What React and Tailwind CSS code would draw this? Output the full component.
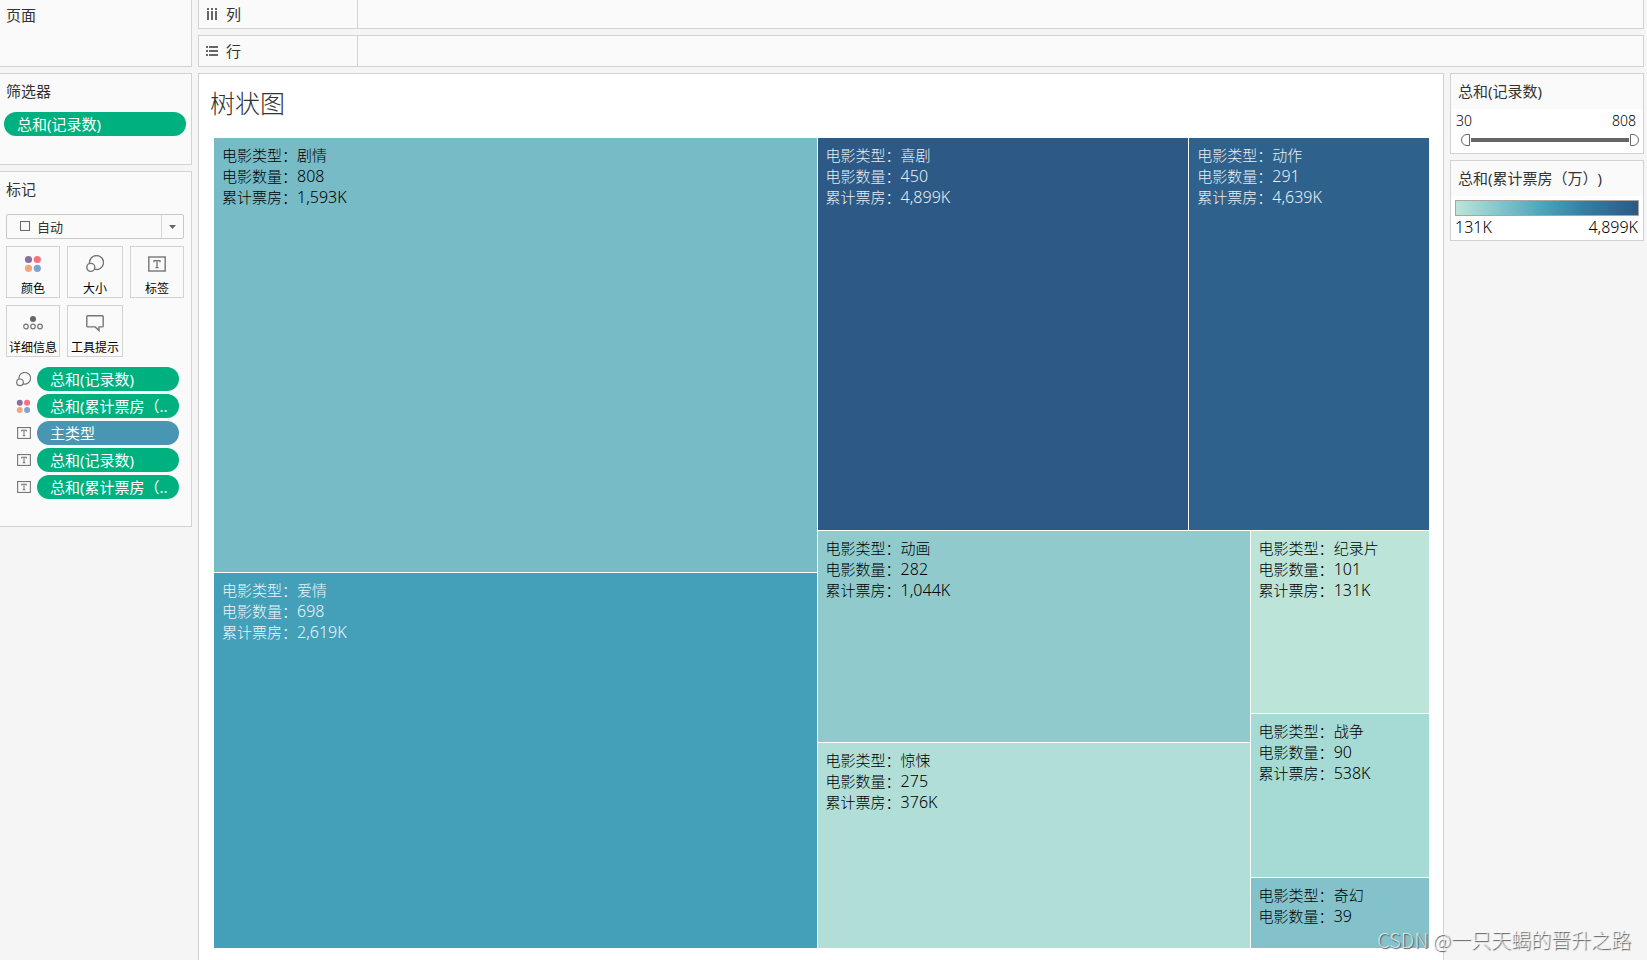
import { useState } from "react";

const tree = {
  dir: "row",
  nodes: [
    {
      dir: "col",
      nodes: [
        { type: "剧情", count: 808, box: "1,593K", cls: "bg-[#76bbc6] text-black" },
        { type: "爱情", count: 698, box: "2,619K", cls: "bg-[#449fb9] text-white/90" },
      ],
    },
    {
      dir: "col",
      nodes: [
        {
          dir: "row",
          nodes: [
            { type: "喜剧", count: 450, box: "4,899K", cls: "bg-[#2c5985] text-white/90" },
            { type: "动作", count: 291, box: "4,639K", cls: "bg-[#2e618c] text-white/90" },
          ],
        },
        {
          dir: "row",
          nodes: [
            {
              dir: "col",
              nodes: [
                { type: "动画", count: 282, box: "1,044K", cls: "bg-[#90cacd] text-black" },
                { type: "惊悚", count: 275, box: "376K", cls: "bg-[#b1ded7] text-black" },
              ],
            },
            {
              dir: "col",
              nodes: [
                { type: "纪录片", count: 101, box: "131K", cls: "bg-[#bce4d8] text-black" },
                { type: "战争", count: 90, box: "538K", cls: "bg-[#a6dad4] text-black" },
                { type: "奇幻", count: 39, cls: "bg-[#83c2cb] text-black" },
              ],
            },
          ],
        },
      ],
    },
  ],
};

const total = (n) => (n.nodes ? n.nodes.reduce((sum, c) => sum + total(c), 0) : n.count);

function TreeNode({ node }) {
  const style = { flexGrow: total(node) };
  if (node.nodes) {
    return (
      <div
        className={`flex basis-0 min-w-0 min-h-0 gap-px ${node.dir === "row" ? "flex-row" : "flex-col"}`}
        style={style}
      >
        {node.nodes.map((child, i) => (
          <TreeNode key={i} node={child} />
        ))}
      </div>
    );
  }
  return (
    <div className={`basis-0 min-w-0 min-h-0 overflow-hidden ${node.cls}`} style={style}>
      <div className="px-2 py-[7px] text-[15px] leading-[21px] font-light whitespace-nowrap">
        <p className="h-[21px]">电影类型：{node.type}</p>
        <p className="h-[21px]">
          电影数量：<span className="text-[16px]">{node.count}</span>
        </p>
        {node.box && (
          <p className="h-[21px]">
            累计票房：<span className="text-[16px]">{node.box}</span>
          </p>
        )}
      </div>
    </div>
  );
}

function ColorIcon({ size = 18 }) {
  return (
    <svg width={size} height={size} viewBox="0 0 18 18">
      <circle cx="4.5" cy="4.5" r="3.6" fill="#87709c" />
      <circle cx="13.3" cy="4.5" r="3.6" fill="#f8707f" />
      <circle cx="4.5" cy="13.3" r="3.6" fill="#f3a67a" />
      <circle cx="13.3" cy="13.3" r="3.6" fill="#7fa3cc" />
    </svg>
  );
}

function SizeIcon({ size = 18 }) {
  return (
    <svg width={size} height={size} viewBox="0 0 18 18" fill="none" stroke="#757575" strokeWidth="1.4">
      <path d="M3.6 8.6A7 7 0 1 1 8.4 14.2" />
      <circle cx="4.8" cy="12.4" r="4" />
    </svg>
  );
}

function LabelIcon({ size = 18 }) {
  return (
    <svg width={size} height={size} viewBox="0 0 18 18" fill="none" stroke="#757575">
      <rect x="0.8" y="2" width="16.4" height="14" strokeWidth="1.4" />
      <path d="M6 7.2V5.6H12V7.2M9 5.6V12.5M7.4 12.6H10.6" strokeWidth="1.3" />
    </svg>
  );
}

function DetailIcon() {
  return (
    <svg width="20" height="18" viewBox="0 0 20 18" fill="none" stroke="#757575" strokeWidth="1.2">
      <circle cx="10" cy="5" r="3" fill="#666" stroke="none" />
      <circle cx="3" cy="12.5" r="2.3" />
      <circle cx="10" cy="12.5" r="2.3" />
      <circle cx="17" cy="12.5" r="2.3" />
    </svg>
  );
}

function TooltipIcon() {
  return (
    <svg width="18" height="18" viewBox="0 0 18 18" fill="none" stroke="#757575" strokeWidth="1.4">
      <path d="M1.7 1.7H16.3Q17.2 1.7 17.2 2.6V12Q17.2 12.9 16.3 12.9H13V16.6L9.2 12.9H1.7Q0.8 12.9 0.8 12V2.6Q0.8 1.7 1.7 1.7Z" />
    </svg>
  );
}

function ColumnsIcon() {
  return (
    <svg width="12" height="12" viewBox="0 0 12 12" fill="#666">
      <path d="M1 0h2v2H1zM5 0h2v2H5zM9 0h2v2H9zM1 3h2v9H1zM5 3h2v9H5zM9 3h2v9H9z" />
    </svg>
  );
}

function RowsIcon() {
  return (
    <svg width="12" height="12" viewBox="0 0 12 12" fill="#666">
      <path d="M0 1h2v2H0zM0 5h2v2H0zM0 9h2v2H0zM3 1h9v2H3zM3 5h9v2H3zM3 9h9v2H3z" />
    </svg>
  );
}

const markButtons = [
  { label: "颜色", icon: <ColorIcon /> },
  { label: "大小", icon: <SizeIcon /> },
  { label: "标签", icon: <LabelIcon /> },
  { label: "详细信息", icon: <DetailIcon /> },
  { label: "工具提示", icon: <TooltipIcon /> },
];

const markPills = [
  { label: "总和(记录数)", icon: <SizeIcon size={15} />, color: "bg-[#00b180]" },
  { label: "总和(累计票房（..", icon: <ColorIcon size={15} />, color: "bg-[#00b180]" },
  { label: "主类型", icon: <LabelIcon size={14} />, color: "bg-[#4996b2]" },
  { label: "总和(记录数)", icon: <LabelIcon size={14} />, color: "bg-[#00b180]" },
  { label: "总和(累计票房（..", icon: <LabelIcon size={14} />, color: "bg-[#00b180]" },
];

function Pill({ label, color }) {
  return (
    <button
      className={`flex-1 min-w-0 h-6 rounded-full px-[13px] text-left text-[15px] leading-6 text-white whitespace-nowrap overflow-hidden ${color}`}
    >
      {label}
    </button>
  );
}

function Shelf({ label, icon, className }) {
  return (
    <div className={`flex bg-[#fafafa] border border-[#d2d2d2] ${className}`}>
      <div className="w-[159px] shrink-0 flex items-center gap-2 pl-[7px] pb-px border-r border-[#d2d2d2]">
        {icon}
        <span>{label}</span>
      </div>
    </div>
  );
}

const thumb =
  "absolute inset-x-0 top-0 w-full h-3 appearance-none bg-transparent pointer-events-none [&::-webkit-slider-thumb]:appearance-none [&::-webkit-slider-thumb]:pointer-events-auto [&::-webkit-slider-thumb]:w-[9px] [&::-webkit-slider-thumb]:h-3 [&::-webkit-slider-thumb]:bg-white [&::-webkit-slider-thumb]:border [&::-webkit-slider-thumb]:border-[#666]";

function RangeFilter() {
  const [low, setLow] = useState(30);
  const [high, setHigh] = useState(808);
  return (
    <section className="border border-[#d2d2d2] bg-white">
      <h2 className="bg-[#fafafa] px-[7px] pt-[6px] pb-[7px]">总和(记录数)</h2>
      <div className="flex justify-between pl-[5px] pr-[7px] pt-[2px] pb-px text-[14px] leading-5 font-light text-black">
        <span>{low}</span>
        <span>{high}</span>
      </div>
      <div className="relative h-3 ml-[10px] mr-1 mt-[2px] mb-[7px]">
        <div className="h-3 flex items-center px-[10px]">
          <div className="h-1 flex-1 bg-[#666]" />
        </div>
        <input
          type="range"
          aria-label="最小值"
          min="30"
          max="808"
          value={low}
          onChange={(e) => setLow(Math.min(Number(e.target.value), high))}
          className={`${thumb} [&::-webkit-slider-thumb]:rounded-l-full`}
        />
        <input
          type="range"
          aria-label="最大值"
          min="30"
          max="808"
          value={high}
          onChange={(e) => setHigh(Math.max(Number(e.target.value), low))}
          className={`${thumb} [&::-webkit-slider-thumb]:rounded-r-full`}
        />
      </div>
    </section>
  );
}

function ColorLegend() {
  return (
    <section className="border border-[#d2d2d2] bg-white">
      <h2 className="bg-[#fafafa] px-[7px] pt-[6px] pb-[7px] whitespace-nowrap">总和(累计票房（万）)</h2>
      <div className="mx-1 mt-1 h-4 border border-[#aaa59c] bg-[linear-gradient(to_right,#bce4d8,#81c3cb_25%,#45a2b9_50%,#347fa4_70%,#2c5985)]" />
      <div className="flex justify-between pl-1 pr-[5px] pt-[1px] pb-[3px] text-[16px] leading-5 font-light text-black">
        <span>131K</span>
        <span>4,899K</span>
      </div>
    </section>
  );
}

export default function App() {
  return (
    <div className="relative h-screen flex gap-[6px] pr-[3px] overflow-hidden bg-[#f5f5f5] text-[#333] text-[15px] leading-[22px] [text-spacing-trim:space-all] font-['Noto_Sans','Noto_Sans_CJK_SC',sans-serif]">
      <aside className="w-48 shrink-0 flex flex-col gap-[6px]">
        <section className="h-[67px] bg-[#fafafa] border-r border-b border-[#d2d2d2] pl-[6px] pt-1">
          <h2>页面</h2>
        </section>

        <section className="h-[92px] bg-[#fafafa] border border-l-0 border-[#d2d2d2] pt-[6px]">
          <h2 className="pl-[6px]">筛选器</h2>
          <div className="flex pl-1 pr-[5px] mt-[10px]">
            <Pill label="总和(记录数)" color="bg-[#00b180]" />
          </div>
        </section>

        <section className="bg-[#fafafa] border border-l-0 border-[#d2d2d2] pl-[6px] pr-[7px] pt-[6px] pb-[27px]">
          <h2>标记</h2>
          <div className="relative mt-[14px] h-[25px]">
            <select
              aria-label="标记类型"
              className="block w-full h-full appearance-none rounded-xs border border-[#c8c8c8] bg-[#fafafa] pl-[30px] text-[13px]"
            >
              <option>自动</option>
            </select>
            <span className="absolute left-[14px] top-[7px] w-[10px] h-[10px] border border-[#666] pointer-events-none" />
            <span className="absolute right-px top-px bottom-px w-[22px] border-l border-[#d8d8d8] flex items-center justify-center pointer-events-none">
              <svg width="7" height="4" viewBox="0 0 7 4" fill="#666">
                <path d="M0 0H7L3.5 4Z" />
              </svg>
            </span>
          </div>

          <div className="mt-[7px] grid grid-cols-[27fr_28fr_27fr] gap-[7px]">
            {markButtons.map((b) => (
              <button
                key={b.label}
                className="h-[52px] border border-[#d2d2d2] flex flex-col items-center justify-between pt-2 text-[12px] leading-4 text-black whitespace-nowrap"
              >
                {b.icon}
                {b.label}
              </button>
            ))}
          </div>

          <ul className="mt-[10px] flex flex-col gap-[3px] pr-[5px]">
            {markPills.map((p, i) => (
              <li key={i} className="flex items-center">
                <span className="w-[31px] flex justify-center pl-1">{p.icon}</span>
                <Pill label={p.label} color={p.color} />
              </li>
            ))}
          </ul>
        </section>
      </aside>

      <div className="flex-1 min-w-0 flex flex-col gap-[6px]">
        <Shelf label="列" icon={<ColumnsIcon />} className="h-[29px] border-t-0" />
        <Shelf label="行" icon={<RowsIcon />} className="h-8" />

        <div className="flex-1 min-h-0 flex gap-[6px]">
          <main className="flex-1 min-w-0 flex flex-col bg-white border border-b-0 border-[#d2d2d2] pl-[15px] pr-[14px] pb-3">
            <h1 className="-ml-1 h-16 pt-[13px] text-[25px] leading-8 font-light">树状图</h1>
            <div className="flex-1 min-h-0 flex">
              <TreeNode node={tree} />
            </div>
          </main>

          <aside className="w-[194px] shrink-0 flex flex-col gap-[6px]">
            <RangeFilter />
            <ColorLegend />
          </aside>
        </div>
      </div>

      <p className="absolute right-4 bottom-[7px] text-[20px] leading-[26px] font-light text-white/70 [text-shadow:1px_1px_1px_#555] font-['Noto_Sans_CJK_SC',sans-serif]">
        CSDN @一只天蝎的晋升之路
      </p>
    </div>
  );
}
